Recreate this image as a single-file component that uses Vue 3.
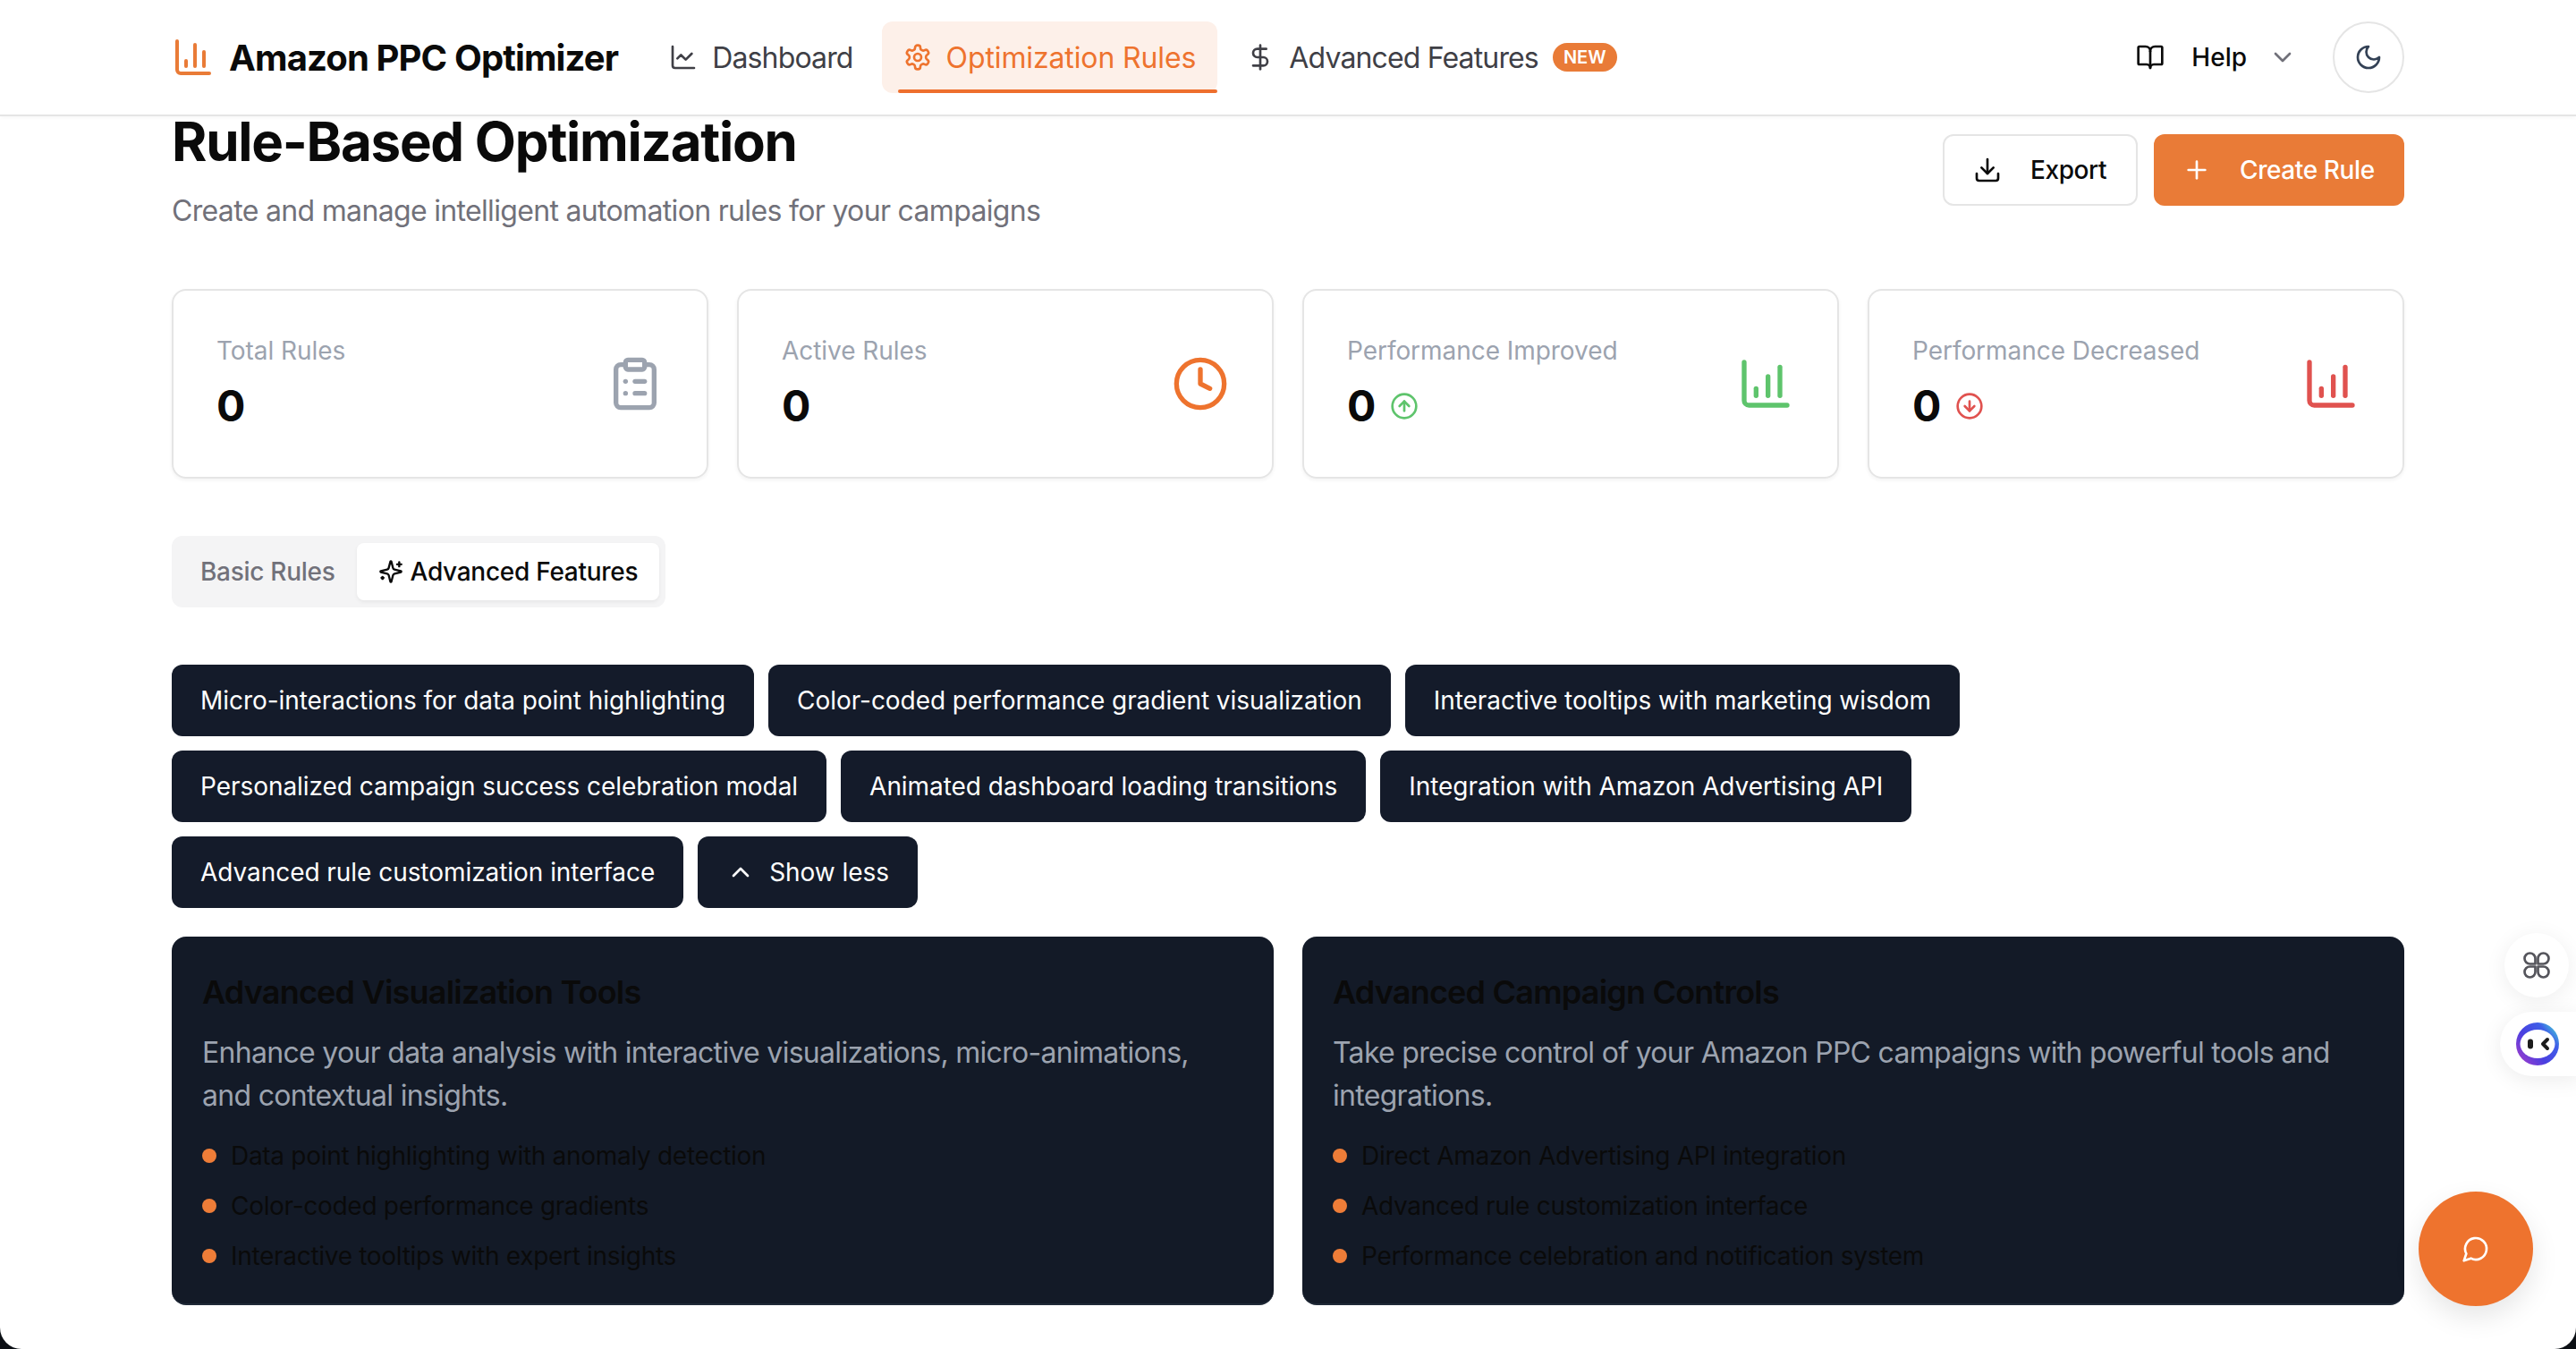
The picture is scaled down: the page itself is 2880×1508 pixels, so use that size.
<script setup>
import { h } from 'vue'

const circle = 'M12 2a10 10 0 1 0 0 20a10 10 0 1 0 0-20z'
const axis = 'M3 3v16a2 2 0 0 0 2 2h16'
const icons = {
  chart: [axis, 'M18 17V9', 'M13 17V5', 'M8 17v-3'],
  chartUp: [axis, 'M18 17V5', 'M13 17V9', 'M8 17v-3'],
  line: [axis, 'm19 9-5 5-4-4-3 3'],
  gear: [
    'M12.22 2h-.44a2 2 0 0 0-2 2v.18a2 2 0 0 1-1 1.73l-.43.25a2 2 0 0 1-2 0l-.15-.08a2 2 0 0 0-2.73.73l-.22.38a2 2 0 0 0 .73 2.73l.15.1a2 2 0 0 1 1 1.72v.51a2 2 0 0 1-1 1.74l-.15.09a2 2 0 0 0-.73 2.73l.22.38a2 2 0 0 0 2.73.73l.15-.08a2 2 0 0 1 2 0l.43.25a2 2 0 0 1 1 1.73V20a2 2 0 0 0 2 2h.44a2 2 0 0 0 2-2v-.18a2 2 0 0 1 1-1.73l.43-.25a2 2 0 0 1 2 0l.15.08a2 2 0 0 0 2.73-.73l.22-.39a2 2 0 0 0-.73-2.73l-.15-.08a2 2 0 0 1-1-1.74v-.5a2 2 0 0 1 1-1.74l.15-.09a2 2 0 0 0 .73-2.73l-.22-.38a2 2 0 0 0-2.73-.73l-.15.08a2 2 0 0 1-2 0l-.43-.25a2 2 0 0 1-1-1.73V4a2 2 0 0 0-2-2z',
    'M12 9a3 3 0 1 0 0 6a3 3 0 1 0 0-6z'
  ],
  dollar: ['M12 2v20', 'M17 5H9.5a3.5 3.5 0 0 0 0 7h5a3.5 3.5 0 0 1 0 7H6'],
  book: ['M12 7v14', 'M3 18a1 1 0 0 1-1-1V4a1 1 0 0 1 1-1h5a4 4 0 0 1 4 4 4 4 0 0 1 4-4h5a1 1 0 0 1 1 1v13a1 1 0 0 1-1 1h-6a3 3 0 0 0-3 3 3 3 0 0 0-3-3z'],
  down: ['m6 9 6 6 6-6'],
  up: ['m18 15-6-6-6 6'],
  moon: ['M12 3a6 6 0 0 0 9 9 9 9 0 1 1-9-9Z'],
  download: ['M21 15v4a2 2 0 0 1-2 2H5a2 2 0 0 1-2-2v-4', 'm7 10 5 5 5-5', 'M12 15V3'],
  plus: ['M5 12h14', 'M12 5v14'],
  clipboard: ['M9 2h6a1 1 0 0 1 1 1v2a1 1 0 0 1-1 1H9a1 1 0 0 1-1-1V3a1 1 0 0 1 1-1z', 'M16 4h2a2 2 0 0 1 2 2v14a2 2 0 0 1-2 2H6a2 2 0 0 1-2-2V6a2 2 0 0 1 2-2h2', 'M12 11h4', 'M12 16h4', 'M8 11h.01', 'M8 16h.01'],
  clock: [circle, 'M12 6v6l4 2'],
  arrowUp: [circle, 'm16 12-4-4-4 4', 'M12 16V8'],
  arrowDown: [circle, 'M12 8v8', 'm8 12 4 4 4-4'],
  sparkles: ['M9.937 15.5A2 2 0 0 0 8.5 14.063l-6.135-1.582a.5.5 0 0 1 0-.962L8.5 9.936A2 2 0 0 0 9.937 8.5l1.582-6.135a.5.5 0 0 1 .963 0L14.063 8.5A2 2 0 0 0 15.5 9.937l6.135 1.581a.5.5 0 0 1 0 .964L15.5 14.063a2 2 0 0 0-1.437 1.437l-1.582 6.135a.5.5 0 0 1-.963 0z', 'M20 3v4', 'M22 5h-4', 'M4 17v2', 'M5 18H3'],
  message: ['M7.9 20A9 9 0 1 0 4 16.1L2 22Z'],
  petals: ['M11 11H7a4 4 0 1 1 4-4z', 'M13 11V7a4 4 0 1 1 4 4z', 'M11 13v4a4 4 0 1 1-4-4z', 'M13 13h4a4 4 0 1 1-4 4z']
}

const Icon = (props) =>
  h(
    'svg',
    {
      width: props.size || 32,
      height: props.size || 32,
      viewBox: '0 0 24 24',
      fill: 'none',
      stroke: 'currentColor',
      'stroke-width': props.sw || 2,
      'stroke-linecap': 'round',
      'stroke-linejoin': 'round'
    },
    icons[props.name].map((d) => h('path', { d }))
  )
Icon.props = ['name', 'size', 'sw']

const stats = [
  { label: 'Total Rules', icon: 'clipboard', tone: 'grey' },
  { label: 'Active Rules', icon: 'clock', tone: 'orange' },
  { label: 'Performance Improved', icon: 'chartUp', tone: 'green', trend: 'arrowUp' },
  { label: 'Performance Decreased', icon: 'chartUp', tone: 'red', trend: 'arrowDown' }
]

const chips = [
  'Micro-interactions for data point highlighting',
  'Color-coded performance gradient visualization',
  'Interactive tooltips with marketing wisdom',
  'Personalized campaign success celebration modal',
  'Animated dashboard loading transitions',
  'Integration with Amazon Advertising API',
  'Advanced rule customization interface'
]

const panels = [
  {
    title: 'Advanced Visualization Tools',
    text: 'Enhance your data analysis with interactive visualizations, micro-animations, and contextual insights.',
    items: ['Data point highlighting with anomaly detection', 'Color-coded performance gradients', 'Interactive tooltips with expert insights']
  },
  {
    title: 'Advanced Campaign Controls',
    text: 'Take precise control of your Amazon PPC campaigns with powerful tools and integrations.',
    items: ['Direct Amazon Advertising API integration', 'Advanced rule customization interface', 'Performance celebration and notification system']
  }
]
</script>

<template>
  <div class="page">
    <header class="topbar">
      <div class="brand">
        <Icon name="chart" :size="48" class="brand-icon" />
        <span class="brand-name">Amazon PPC Optimizer</span>
      </div>
      <nav class="nav">
        <a class="nav-item"><Icon name="line" />Dashboard</a>
        <a class="nav-item active"><Icon name="gear" />Optimization Rules</a>
        <a class="nav-item"><Icon name="dollar" />Advanced Features<span class="badge">NEW</span></a>
      </nav>
      <div class="top-right">
        <button class="help">
          <Icon name="book" />
          <span>Help</span>
          <Icon name="down" class="chev" />
        </button>
        <button class="theme"><Icon name="moon" /></button>
      </div>
    </header>

    <main class="main">
      <section class="heading">
        <div>
          <h1>Rule-Based Optimization</h1>
          <p>Create and manage intelligent automation rules for your campaigns</p>
        </div>
        <div class="actions">
          <button class="btn outline"><Icon name="download" />Export</button>
          <button class="btn primary"><Icon name="plus" />Create Rule</button>
        </div>
      </section>

      <section class="stats">
        <article v-for="s in stats" :key="s.label" class="stat">
          <div>
            <div class="stat-label">{{ s.label }}</div>
            <div class="stat-value">
              0
              <Icon v-if="s.trend" :name="s.trend" class="trend" :class="s.tone" />
            </div>
          </div>
          <Icon :name="s.icon" :size="64" :class="s.tone" />
        </article>
      </section>

      <div class="tabs">
        <span class="tab">Basic Rules</span>
        <span class="tab on"><Icon name="sparkles" :size="28" />Advanced Features</span>
      </div>

      <div class="chips">
        <button v-for="c in chips" :key="c" class="chip">{{ c }}</button>
        <button class="chip"><Icon name="up" class="chip-icon" />Show less</button>
      </div>

      <section class="panels">
        <article v-for="p in panels" :key="p.title" class="panel">
          <h3>{{ p.title }}</h3>
          <p>{{ p.text }}</p>
          <ul>
            <li v-for="i in p.items" :key="i"><span class="dot"></span>{{ i }}</li>
          </ul>
        </article>
      </section>
    </main>

    <button class="float-round"><Icon name="petals" :size="36" :sw="1.8" /></button>
    <button class="float-pill">
      <svg width="48" height="48" viewBox="0 0 48 48">
        <defs>
          <linearGradient id="ring" x1="0" y1="1" x2="1" y2="0.2">
            <stop offset="0" stop-color="#b03cc8" />
            <stop offset="0.45" stop-color="#4a3fe0" />
            <stop offset="0.8" stop-color="#3f5fe8" />
            <stop offset="1" stop-color="#45c4d8" />
          </linearGradient>
        </defs>
        <circle cx="24" cy="24" r="24" fill="url(#ring)" />
        <ellipse cx="24" cy="24" rx="19.5" ry="16" fill="#fff" />
        <rect x="13" y="18.5" width="6" height="11" rx="3" fill="#1c1c1c" />
        <path d="M35 19l-5 5 5 5" fill="none" stroke="#1c1c1c" stroke-width="4" stroke-linecap="round" stroke-linejoin="round" />
      </svg>
    </button>
    <button class="fab"><Icon name="message" /></button>
  </div>
</template>

<style scoped>
.page {
  position: relative;
  height: 1508px;
  overflow: hidden;
  background: #fff;
  border-radius: 0 0 24px 24px;
  font-family: Inter, 'Liberation Sans', sans-serif;
  color: #0a0a0a;
}
button {
  font-family: inherit;
  border: 0;
  background: none;
  padding: 0;
  color: inherit;
  white-space: nowrap;
}
svg {
  flex: none;
  display: block;
}

.topbar {
  height: 130px;
  box-sizing: border-box;
  border-bottom: 2px solid #e5e5e5;
  padding: 0 192px;
  display: flex;
  align-items: center;
  box-shadow: 0 2px 4px rgba(0, 0, 0, 0.03);
}
.brand {
  display: flex;
  align-items: center;
  gap: 16px;
}
.brand-icon {
  color: #e97b37;
}
.brand-name {
  font-size: 40px;
  font-weight: 700;
  letter-spacing: -0.87px;
}
.nav {
  display: flex;
  gap: 8px;
  margin-left: 33px;
}
.nav-item {
  position: relative;
  height: 80px;
  box-sizing: border-box;
  padding: 0 24px;
  display: flex;
  align-items: center;
  gap: 16px;
  font-size: 32px;
  letter-spacing: -0.85px;
  color: #3f3f46;
  border-radius: 12px;
  white-space: nowrap;
}
.nav-item.active {
  background: #fdf0e9;
  color: #ee732e;
  letter-spacing: -0.12px;
}
.nav-item.active::after {
  content: '';
  position: absolute;
  left: 18px;
  right: 0;
  bottom: 0;
  height: 4px;
  border-radius: 2px;
  background: #ee6f2d;
}
.badge {
  height: 32px;
  padding: 0 12px;
  display: flex;
  align-items: center;
  border-radius: 16px;
  background: #e97b37;
  color: #fff;
  font-size: 20px;
  font-weight: 600;
  letter-spacing: 0;
}
.top-right {
  margin-left: auto;
  display: flex;
  align-items: center;
  gap: 16px;
}
.help {
  height: 80px;
  padding: 0 24px;
  display: flex;
  align-items: center;
  gap: 30px;
  font-size: 28px;
  font-weight: 500;
}
.chev {
  color: #71717a;
  margin-left: -6px;
}
.theme {
  width: 80px;
  height: 80px;
  box-sizing: border-box;
  border: 2px solid #e5e5e5;
  border-radius: 50%;
  display: flex;
  align-items: center;
  justify-content: center;
  color: #334155;
}

.main {
  padding: 0 192px;
}
.heading {
  display: flex;
  justify-content: space-between;
  align-items: flex-start;
}
h1 {
  margin: -2px 0 0;
  font-size: 60px;
  line-height: 60px;
  font-weight: 700;
  letter-spacing: -1.26px;
}
.heading p {
  margin: 26px 0 0;
  font-size: 32px;
  line-height: 44px;
  letter-spacing: -0.67px;
  color: #71717a;
}
.actions {
  display: flex;
  gap: 18px;
  margin-top: 20px;
}
.btn {
  height: 80px;
  box-sizing: border-box;
  border-radius: 12px;
  display: flex;
  align-items: center;
  gap: 32px;
  font-size: 28px;
  font-weight: 500;
  letter-spacing: -0.4px;
}
.btn.outline {
  width: 218px;
  padding: 0 32px;
  border: 2px solid #e5e5e5;
}
.btn.primary {
  width: 280px;
  padding: 0 32px;
  background: #e97b37;
  color: #fff;
}

.stats {
  margin-top: 65px;
  display: grid;
  grid-template-columns: repeat(4, 1fr);
  gap: 32px;
}
.stat {
  height: 212px;
  box-sizing: border-box;
  border: 2px solid #e5e5e5;
  border-radius: 16px;
  padding: 48px;
  display: flex;
  align-items: center;
  justify-content: space-between;
  box-shadow: 0 2px 4px rgba(0, 0, 0, 0.05);
}
.stat-label {
  font-size: 28px;
  line-height: 40px;
  letter-spacing: -0.05px;
  color: #9ca3af;
}
.stat-value {
  margin-top: 10px;
  display: flex;
  align-items: center;
  gap: 16px;
  font-size: 48px;
  line-height: 64px;
  font-weight: 700;
  color: #0a0a0a;
}
.grey {
  color: #9ca3af;
}
.orange {
  color: #ee732e;
}
.green {
  color: #5ec46c;
}
.red {
  color: #e0524f;
}

.tabs {
  margin-top: 64px;
  width: 552px;
  height: 80px;
  box-sizing: border-box;
  padding: 8px;
  background: #f4f4f5;
  border-radius: 12px;
  display: flex;
  align-items: center;
}
.tab {
  height: 64px;
  padding: 0 24px;
  display: flex;
  align-items: center;
  gap: 8px;
  font-size: 28px;
  font-weight: 500;
  letter-spacing: -0.28px;
  color: #71717a;
  border-radius: 8px;
  white-space: nowrap;
}
.tab.on {
  background: #fff;
  color: #0a0a0a;
  box-shadow: 0 2px 4px rgba(0, 0, 0, 0.06);
}

.chips {
  margin-top: 64px;
  display: flex;
  flex-wrap: wrap;
  gap: 16px;
}
.chip {
  height: 80px;
  padding: 0 32px;
  background: #141b2a;
  color: #fff;
  border-radius: 12px;
  display: flex;
  align-items: center;
  font-size: 28px;
  font-weight: 400;
  letter-spacing: -0.05px;
}
.chip-icon {
  margin-right: 16px;
}

.panels {
  margin-top: 32px;
  display: grid;
  grid-template-columns: repeat(2, 1fr);
  gap: 32px;
}
.panel {
  height: 412px;
  box-sizing: border-box;
  padding: 32px 34px 0;
  background: #131a27;
  border-bottom: 2px solid #1f2937;
  border-radius: 16px;
}
.panel h3 {
  margin: 0;
  font-size: 36px;
  line-height: 60px;
  font-weight: 600;
  letter-spacing: -0.8px;
  color: #0a0a0a;
}
.panel p {
  margin: 14px 0 0;
  font-size: 32px;
  line-height: 48px;
  letter-spacing: -0.7px;
  color: #9ca3af;
}
.panel ul {
  list-style: none;
  margin: 15px 0 0;
  padding: 0;
}
.panel li {
  height: 56px;
  display: flex;
  align-items: center;
  gap: 16px;
  font-size: 28px;
  letter-spacing: -0.3px;
  color: #0a0a0a;
}
.dot {
  width: 16px;
  height: 16px;
  border-radius: 50%;
  background: #ee7d38;
}

.float-round {
  position: absolute;
  left: 2800px;
  top: 1043px;
  width: 72px;
  height: 72px;
  border-radius: 50%;
  background: #fff;
  color: #55555c;
  display: flex;
  align-items: center;
  justify-content: center;
  box-shadow: 0 4px 24px rgba(0, 0, 0, 0.07);
}
.float-pill {
  position: absolute;
  left: 2795px;
  top: 1131px;
  width: 90px;
  height: 72px;
  padding-left: 18px;
  border-radius: 36px 0 0 36px;
  background: #fff;
  display: flex;
  align-items: center;
  box-shadow: 0 4px 24px rgba(0, 0, 0, 0.08);
}
.fab {
  position: absolute;
  left: 2704px;
  top: 1332px;
  width: 128px;
  height: 128px;
  border-radius: 50%;
  background: #ee732e;
  color: #fff;
  display: flex;
  align-items: center;
  justify-content: center;
  box-shadow: 0 12px 30px rgba(0, 0, 0, 0.1);
}
</style>

<style>
html,
body {
  margin: 0;
  background: #0b0f14;
  overflow: hidden;
}
</style>
